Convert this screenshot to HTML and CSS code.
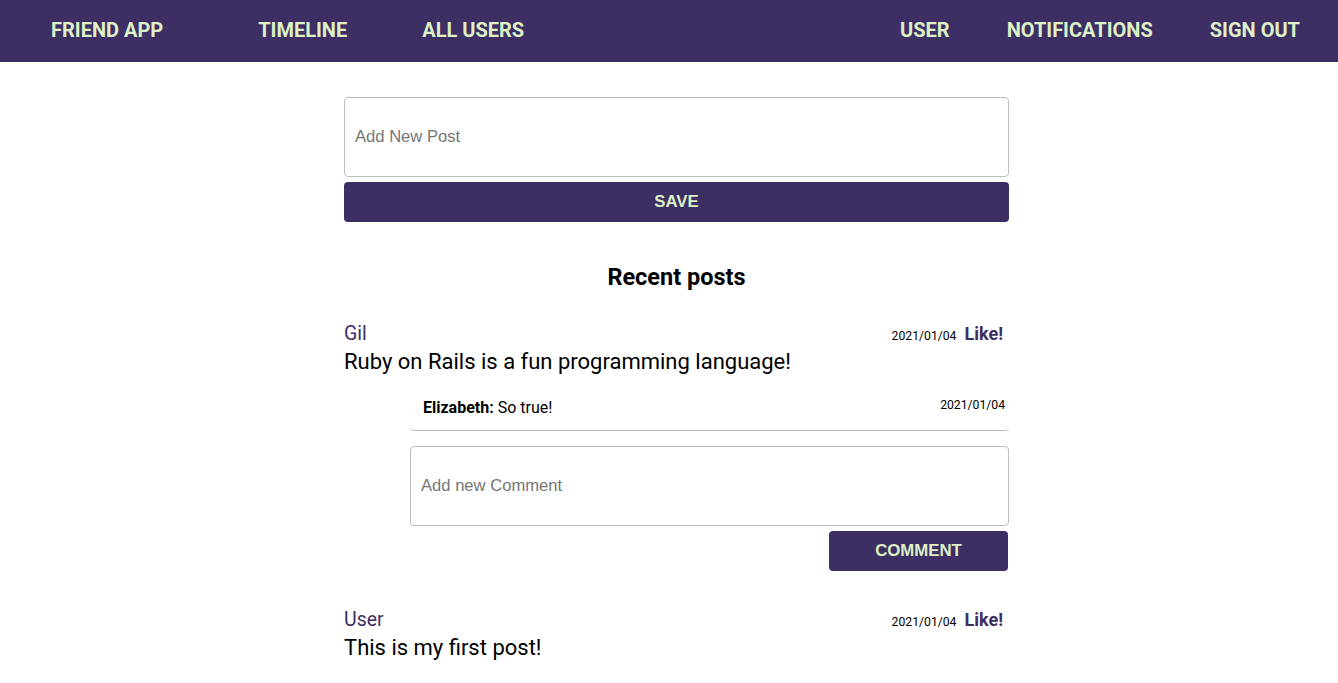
FILE: index.html
```html
<!DOCTYPE html>
<html>
<head>
<meta charset="utf-8">
<link rel="stylesheet" href="styles.css">
</head>
<body>
<nav class="nav">
  <div class="nav-left">
    <a class="nav-link brand" href="#">FRIEND APP</a>
    <a class="nav-link" href="#">TIMELINE</a>
    <a class="nav-link" href="#">ALL USERS</a>
  </div>
  <div class="nav-right">
    <a class="nav-link" href="#">USER</a>
    <a class="nav-link" href="#">NOTIFICATIONS</a>
    <a class="nav-link" href="#">SIGN OUT</a>
  </div>
</nav>
<main class="main">
  <form class="post-form">
    <textarea class="field post-field" placeholder="Add New Post"></textarea>
    <button type="button" class="btn btn-full">SAVE</button>
  </form>
  <h2 class="section-title">Recent posts</h2>
  <article class="post">
    <div class="post-head">
      <a class="post-author" href="#">Gil</a>
      <div class="post-meta">
        <span class="date">2021/01/04</span>
        <a class="like" href="#">Like!</a>
      </div>
    </div>
    <p class="post-body">Ruby on Rails is a fun programming language!</p>
    <div class="comments">
      <div class="comment">
        <p class="comment-text"><strong>Elizabeth:</strong> So true!</p>
        <span class="date">2021/01/04</span>
      </div>
      <form class="comment-form">
        <textarea class="field comment-field" placeholder="Add new Comment"></textarea>
        <button type="button" class="btn btn-comment">COMMENT</button>
      </form>
    </div>
  </article>
  <article class="post">
    <div class="post-head">
      <a class="post-author" href="#">User</a>
      <div class="post-meta">
        <span class="date">2021/01/04</span>
        <a class="like" href="#">Like!</a>
      </div>
    </div>
    <p class="post-body">This is my first post!</p>
  </article>
</main>
</body>
</html>
```
FILE: styles.css
```css
* { box-sizing: border-box; }
body {
  margin: 0;
  font-family: Roboto, "Noto Sans", sans-serif;
  color: #000;
  background: #fff;
}
a { text-decoration: none; }
.nav {
  height: 62px;
  background: #3d2e63;
  display: flex;
  align-items: center;
  justify-content: space-between;
  padding: 0 38px 0 51px;
}
.nav-left, .nav-right { display: flex; align-items: center; }
.nav-link {
  color: #ddf0c6;
  font-weight: 700;
  font-size: 20px;
  line-height: 24px;
  margin-top: -2px;
}
.nav-left .nav-link { margin-right: 75px; }
.nav-left .brand { margin-right: 95px; }
.nav-right .nav-link { margin-left: 57px; }
.main {
  width: 665px;
  margin-left: calc(50% - 325px);
  padding-top: 35px;
}
.post-form { display: flex; flex-direction: column; gap: 5px; }
.field {
  display: block;
  width: 100%;
  height: 80px;
  border: 1px solid #bdbdbd;
  border-radius: 4px;
  padding: 29px 10px;
  font-family: "Liberation Sans", Arial, sans-serif;
  font-size: 16.6px;
  resize: none;
  color: #333;
}
.field::placeholder { color: #767676; }
.btn {
  height: 40px;
  border: none;
  border-radius: 4px;
  background: #3d2e63;
  color: #ddf0c6;
  font-family: "Liberation Sans", Arial, sans-serif;
  font-weight: 700;
  font-size: 16.8px;
}
.btn-full { width: 100%; }
.section-title {
  text-align: center;
  font-size: 23.5px;
  font-weight: 700;
  margin: 41px 0 31px;
  line-height: 28px;
}
.post { margin-bottom: 37px; }
.post-head {
  display: flex;
  justify-content: space-between;
  align-items: center;
  height: 22px;
}
.post-author { color: #3d2e63; font-size: 19.5px; }
.post-meta { display: flex; align-items: baseline; gap: 8px; padding-right: 6px; }
.date { font-size: 12.2px; color: #000; }
.like { color: #3d2e63; font-weight: 700; font-size: 18px; }
.post-body { margin: 4px 0 0; font-size: 22px; line-height: 28px; }
.comments { margin-left: 66px; margin-top: 16px; }
.comment {
  display: flex;
  justify-content: space-between;
  align-items: flex-start;
  border-bottom: 1px solid #bdbdbd;
  border-radius: 4px;
  padding: 6px 4px 12px 13px;
}
.comment-text { margin: 0; font-size: 16px; line-height: 20px; }
.comment .date { padding-top: 0; line-height: 15px; }
.comment-form {
  display: flex;
  flex-direction: column;
  align-items: flex-end;
  gap: 5px;
  margin-top: 15px;
}
.btn-comment { width: 179px; margin-right: 1px; }
```
